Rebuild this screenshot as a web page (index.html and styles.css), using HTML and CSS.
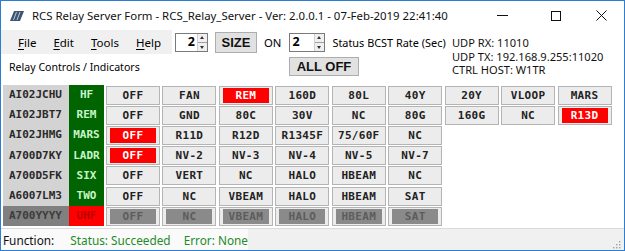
FILE: index.html
```html
<!DOCTYPE html>
<html lang="en">

<head>
    <meta charset="UTF-8">
    <title>RCS Relay Server Form</title>
    <link rel="stylesheet" href="styles.css">
</head>

<body>
    <div class="window">
        <div class="titlebar">
            <svg class="app-icon" width="14" height="10" viewBox="0 0 14 10">
                <path d="M4 0 L14 0 L10 10 L0 10 Z" fill="#3f5470"/>
                <path d="M6.5 1 L3.5 9 M10 1 L7 9" stroke="#c9d4e2" stroke-width="0.9"/>
            </svg>
            <span class="title">RCS Relay Server Form - RCS_Relay_Server - Ver: 2.0.0.1 - 07-Feb-2019 22:41:40</span>
            <div class="controls">
                <span class="ctl-min"></span>
                <span class="ctl-max"></span>
                <svg class="ctl-close" width="11" height="11" viewBox="0 0 11 11">
                    <path d="M0.5 0.5 L10.5 10.5 M10.5 0.5 L0.5 10.5" stroke="#111" stroke-width="1"/>
                </svg>
            </div>
        </div>

        <div class="top">
            <div class="top-left">
                <div class="toolbar">
                    <div class="menustrip">
                        <span class="grip"></span>
                        <span class="menu"><u>F</u>ile</span>
                        <span class="menu"><u>E</u>dit</span>
                        <span class="menu"><u>T</u>ools</span>
                        <span class="menu"><u>H</u>elp</span>
                    </div>
                    <div class="spin spin-size">
                        <span class="spin-val">2</span>
                        <span class="spin-arrows"><i class="up"></i><i class="down"></i></span>
                    </div>
                    <button class="win-btn size-btn">SIZE</button>
                    <span class="lbl on-lbl">ON</span>
                    <div class="spin spin-rate">
                        <span class="spin-val left">2</span>
                        <span class="spin-arrows"><i class="up"></i><i class="down"></i></span>
                    </div>
                    <span class="lbl rate-lbl">Status BCST Rate (Sec)</span>
                </div>
                <div class="subrow">
                    <span class="lbl relay-lbl">Relay Controls / Indicators</span>
                    <button class="win-btn alloff-btn">ALL OFF</button>
                </div>
            </div>
            <div class="udp">
                <span>UDP RX: 11010</span>
                <span>UDP TX: 192.168.9.255:11020</span>
                <span>CTRL HOST: W1TR</span>
            </div>
        </div>

        <div id="relay-grid" class="grid"></div>

        <div class="statusbar">
            <div class="status-left">
                <span class="fn">Function:</span>
                <span class="ok">Status: Succeeded</span>
                <span class="ok err">Error: None</span>
            </div>
            <svg class="grip-corner" width="8" height="8" viewBox="0 0 8 8">
                <rect x="6" y="0" width="1.4" height="1.4" fill="#a0a0a0"/>
                <rect x="3" y="3" width="1.4" height="1.4" fill="#a0a0a0"/>
                <rect x="6" y="3" width="1.4" height="1.4" fill="#a0a0a0"/>
                <rect x="0" y="6" width="1.4" height="1.4" fill="#a0a0a0"/>
                <rect x="3" y="6" width="1.4" height="1.4" fill="#a0a0a0"/>
                <rect x="6" y="6" width="1.4" height="1.4" fill="#a0a0a0"/>
            </svg>
        </div>
    </div>

    <script>
        let relays = [
            { call: "AI02JCHU", band: "HF", buttons: ["OFF", "FAN", "REM!", "160D", "80L", "40Y", "20Y", "VLOOP", "MARS"] },
            { call: "AI02JBT7", band: "REM", buttons: ["OFF", "GND", "80C", "30V", "NC", "80G", "160G", "NC", "R13D!"] },
            { call: "AI02JHMG", band: "MARS", buttons: ["OFF!", "R11D", "R12D", "R1345F", "75/60F", "NC"] },
            { call: "A700D7KY", band: "LADR", buttons: ["OFF!", "NV-2", "NV-3", "NV-4", "NV-5", "NV-7"] },
            { call: "A700D5FK", band: "SIX", buttons: ["OFF", "VERT", "NC", "HALO", "HBEAM", "NC"] },
            { call: "A6007LM3", band: "TWO", buttons: ["OFF", "NC", "VBEAM", "HALO", "HBEAM", "SAT"] },
            { call: "A700YYYY", band: "UHF", off: true, buttons: ["OFF", "NC", "VBEAM", "HALO", "HBEAM", "SAT"] }
        ];

        let grid = document.querySelector("#relay-grid");

        for (let relay of relays) {
            let row = document.createElement("DIV");
            row.classList.add("relay-row");
            if (relay.off) {
                row.classList.add("offline");
            }
            let html = `<span class="call">${relay.call}</span><span class="band">${relay.band}</span>`;
            for (let name of relay.buttons) {
                let active = name.endsWith("!");
                let label = name.replace("!", "");
                html += `<span class="relay-btn"><span class="face${active ? " active" : ""}">${label}</span></span>`;
            }
            row.innerHTML = html;
            grid.appendChild(row);
        }
    </script>
</body>

</html>
```

FILE: styles.css
```css
* {
    box-sizing: border-box;
}

body {
    margin: 0;
    padding: 0;
    background-color: #fff;
    font-family: "Noto Sans", sans-serif;
    font-size: 11px;
    color: #000;
}

.window {
    width: 625px;
    height: 251px;
    border: 1px solid #2d7dd2;
    display: flex;
    flex-direction: column;
    overflow: hidden;
}

/* title bar */

.titlebar {
    height: 29px;
    display: flex;
    align-items: center;
    padding-left: 9px;
}

.app-icon {
    margin-right: 8px;
}

.title {
    font-size: 11.4px;
    color: #111;
    white-space: nowrap;
}

.controls {
    margin-left: auto;
    display: flex;
    align-items: center;
}

.ctl-min {
    width: 11px;
    height: 1px;
    background-color: #111;
    margin-right: 43px;
}

.ctl-max {
    width: 10px;
    height: 10px;
    border: 1px solid #111;
    margin-right: 35px;
}

.ctl-close {
    margin-right: 17px;
}

/* top area */

.top {
    display: flex;
    height: 54px;
}

.top-left {
    width: 450px;
    display: flex;
    flex-direction: column;
}

.toolbar {
    height: 24px;
    display: flex;
    align-items: center;
}

.menustrip {
    width: 171px;
    height: 24px;
    background-color: #f0f0f0;
    display: flex;
    align-items: center;
    padding-left: 5px;
    font-size: 11.5px;
}

.grip {
    width: 2px;
    height: 14px;
    background-image: radial-gradient(circle, #a8a8a8 45%, transparent 55%);
    background-size: 2px 3px;
    margin-right: 12px;
}

.menu {
    margin-right: 17px;
}

.menu u {
    text-decoration-thickness: 1px;
    text-underline-offset: 2px;
}

.spin {
    height: 19px;
    border: 1px solid #7a7a7a;
    background-color: #fff;
    display: flex;
    align-items: stretch;
    font-size: 12.5px;
    font-weight: bold;
}

.spin-size {
    width: 33px;
    margin-left: 3px;
}

.spin-rate {
    width: 36px;
    margin-left: 8px;
}

.spin-val {
    flex: 1;
    text-align: right;
    padding-right: 2px;
    line-height: 16px;
}

.spin-val.left {
    text-align: left;
    padding-left: 2px;
}

.spin-arrows {
    width: 10px;
    display: flex;
    flex-direction: column;
    border-left: 1px solid #d0d0d0;
    background-color: #f0f0f0;
}

.spin-arrows i {
    flex: 1;
    position: relative;
}

.spin-arrows i.up {
    border-bottom: 1px solid #a0a0a0;
}

.spin-arrows i::after {
    content: "";
    position: absolute;
    left: 2px;
    border-left: 2.5px solid transparent;
    border-right: 2.5px solid transparent;
}

.spin-arrows i.up::after {
    top: 2px;
    border-bottom: 3px solid #333;
}

.spin-arrows i.down::after {
    top: 3px;
    border-top: 3px solid #333;
}

.win-btn {
    font-family: "Liberation Sans", Arial, sans-serif;
    font-weight: bold;
    font-size: 13px;
    background-color: #e1e1e1;
    border: 1px solid #adadad;
    padding: 0;
    color: #111;
}

.size-btn {
    width: 42px;
    height: 21px;
    margin-left: 7px;
}

.lbl {
    font-size: 11.3px;
    white-space: nowrap;
}

.on-lbl {
    margin-left: 7px;
}

.rate-lbl {
    margin-left: 7px;
    font-size: 10.9px;
}

.subrow {
    height: 30px;
    display: flex;
    align-items: center;
    padding-left: 8px;
    padding-bottom: 5px;
}

.relay-lbl {
    width: 280px;
    font-size: 10.6px;
}

.alloff-btn {
    width: 70px;
    height: 19px;
}

.udp {
    display: flex;
    flex-direction: column;
    padding-top: 6px;
    margin-left: 1px;
    font-size: 11.1px;
    line-height: 13.5px;
    color: #111;
    white-space: nowrap;
}

/* relay grid */

.grid {
    padding-left: 2px;
    margin-top: 1px;
}

.relay-row {
    height: 20.2px;
    display: flex;
    align-items: center;
    font-family: "DejaVu Sans Mono", monospace;
    font-weight: bold;
    font-size: 11px;
}

.call {
    width: 66px;
    height: 100%;
    line-height: 20px;
    background-color: #d3d3d3;
    color: #2a2a2a;
    padding-left: 6px;
}

.band {
    width: 35px;
    height: 100%;
    line-height: 20px;
    background-color: #006400;
    color: #c8f5c8;
    text-align: center;
    margin-right: 2px;
}

.relay-btn {
    width: 54px;
    height: 19px;
    margin-right: 2.45px;
    border: 1px solid #b4b4b4;
    background-color: #ececec;
    padding: 1px 3px;
    display: flex;
}

.face {
    flex: 1;
    text-align: center;
    line-height: 15px;
    color: #222;
    letter-spacing: 0.3px;
}

.face.active {
    background-color: #f00;
    color: #fff;
}

.offline .call {
    background-color: #808080;
    color: #3c3c3c;
}

.offline .band {
    background-color: #f00;
    color: #c00000;
}

.offline .face {
    background-color: #8a8a8a;
    color: #5c5c5c;
}

/* status bar */

.statusbar {
    margin-top: auto;
    height: 22px;
    border-top: 1px solid #dadada;
    background-color: #f0f0f0;
    display: flex;
    align-items: center;
}

.status-left {
    width: 247px;
    height: 21px;
    background-color: #fafafa;
    display: flex;
    align-items: center;
    padding-left: 2px;
    font-size: 11.8px;
    white-space: nowrap;
}

.fn {
    color: #111;
    width: 69px;
}

.ok {
    color: #1f8a2a;
}

.err {
    margin-left: 13px;
}

.grip-corner {
    margin-left: auto;
    margin-right: 3px;
    margin-top: 10px;
}
```
